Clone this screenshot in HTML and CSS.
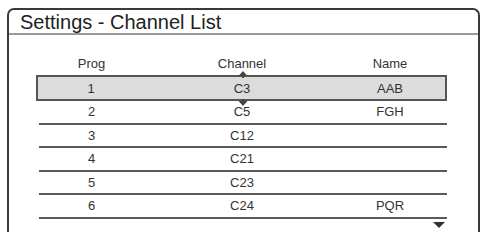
FILE: index.html
```html
<!DOCTYPE html>
<html lang="en">
<head>
    <meta charset="UTF-8">
    <title>Settings - Channel List</title>
    <link rel="stylesheet" href="styles.css">
</head>
<body>
    <div class="frame">
        <div class="title">Settings - Channel List</div>
        <div class="list">
            <div class="row head">
                <span>Prog</span>
                <span>Channel</span>
                <span>Name</span>
            </div>
            <div class="row selected">
                <span>1</span>
                <span>C3</span>
                <span>AAB</span>
                <svg class="caret up" width="10" height="7" viewBox="0 0 10 7"><path d="M5 0 L9.5 5 L6 5 L6 7 L4 7 L4 5 L0.5 5 Z" fill="#444"/></svg>
                <svg class="caret down" width="10" height="7" viewBox="0 0 10 7"><path d="M5 7 L9.5 2 L6 2 L6 0 L4 0 L4 2 L0.5 2 Z" fill="#444"/></svg>
            </div>
            <div class="row">
                <span>2</span>
                <span>C5</span>
                <span>FGH</span>
            </div>
            <div class="row">
                <span>3</span>
                <span>C12</span>
                <span></span>
            </div>
            <div class="row">
                <span>4</span>
                <span>C21</span>
                <span></span>
            </div>
            <div class="row">
                <span>5</span>
                <span>C23</span>
                <span></span>
            </div>
            <div class="row">
                <span>6</span>
                <span>C24</span>
                <span>PQR</span>
            </div>
            <div class="more">
                <svg width="12" height="6" viewBox="0 0 12 6"><path d="M0 0 L12 0 L6 6 Z" fill="#333"/></svg>
            </div>
        </div>
    </div>
</body>
</html>
```

FILE: styles.css
```css
body {
    margin: 0;
    background-color: #fff;
    color: #333;
    font-family: "Liberation Sans", Arial, sans-serif;
    overflow: hidden;
}
.frame {
    margin: 8px 0 0 7px;
    width: 469px;
    height: 222px;
    border: 2px solid #3a3a3a;
    border-bottom: none;
    border-radius: 7px 7px 0 0;
}
.title {
    height: 23px;
    line-height: 24px;
    padding-left: 11px;
    font-size: 20px;
    color: #222;
    border-bottom: 2px solid #9a9a9a;
}
.list {
    margin: 18px 0 0 27px;
    width: 411px;
}
.row {
    position: relative;
    display: grid;
    grid-template-columns: 105px 196px 100px;
    height: 21.5px;
    line-height: 22px;
    font-size: 13px;
    text-align: center;
    border-bottom: 2px solid #5a5a5a;
    margin-left: 3px;
}
.row.head {
    height: 22px;
    border-bottom: none;
}
.row.selected {
    margin-left: 0;
    height: 22px;
    line-height: 23px;
    border: 2px solid #555;
    background-color: #dcdcdc;
    grid-template-columns: 106px 196px 100px;
}
.caret {
    position: absolute;
    left: 200px;
}
.caret.up {
    top: -6px;
}
.caret.down {
    bottom: -7px;
}
.more {
    display: flex;
    justify-content: flex-end;
    margin-top: 3px;
    padding-right: 2px;
}
```
